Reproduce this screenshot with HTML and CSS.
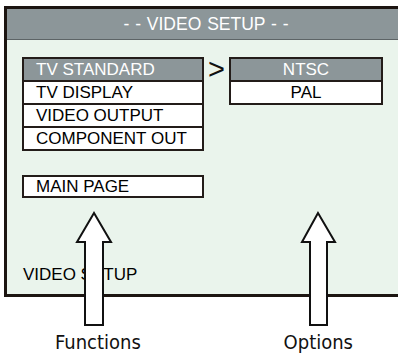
FILE: index.html
```html
<!DOCTYPE html>
<html lang="en">
<head>
    <meta charset="UTF-8">
    <title>Video Setup</title>
    <link rel="stylesheet" href="styles.css">
</head>
<body>
    <div class="page">
        <div class="screen">
            <div class="screen-title">- - VIDEO SETUP - -</div>
            <div class="screen-body">
                <div class="menus">
                    <div class="functions">
                        <div class="menu">
                            <div class="item selected">TV STANDARD</div>
                            <div class="item">TV DISPLAY</div>
                            <div class="item">VIDEO OUTPUT</div>
                            <div class="item">COMPONENT OUT</div>
                        </div>
                        <div class="menu main-page">
                            <div class="item">MAIN PAGE</div>
                        </div>
                    </div>
                    <div class="pointer">&gt;</div>
                    <div class="menu options">
                        <div class="item selected">NTSC</div>
                        <div class="item">PAL</div>
                    </div>
                </div>
                <div class="screen-footer">VIDEO SETUP</div>
            </div>
        </div>

        <div class="captions">
            <span class="caption caption-left">Functions</span>
            <span class="caption caption-right">Options</span>
        </div>

        <!-- callout arrows drawn over the screen -->
        <svg class="arrows" width="398" height="355" viewBox="0 0 398 355">
            <path d="M94 213 L77 242 L85 242 L85 325 L103 325 L103 242 L111 242 Z" />
            <path d="M318 213 L302 242 L310 242 L310 325 L327 325 L327 242 L335 242 Z" />
        </svg>
    </div>
</body>
</html>
```

FILE: styles.css
```css
body {
    margin: 0;
    background-color: #fff;
    overflow: hidden;
    font-family: "Liberation Sans", Arial, sans-serif;
}
.page {
    position: relative;
    width: 398px;
    height: 355px;
    overflow: hidden;
}
.screen {
    margin: 6px 0 0 4px;
    width: 420px;
    height: 285px;
    border: 3px solid #1c1511;
    border-right: none;
    background-color: #eaf4ec;
    display: flex;
    flex-direction: column;
}
.screen-title {
    height: 30px;
    line-height: 30px;
    background-color: #8c9699;
    border-bottom: 1px solid #5d6466;
    color: #fff;
    font-size: 17.5px;
    word-spacing: 1px;
    padding-right: 22px;
    text-align: center;
}
.screen-body {
    flex: 1;
    display: flex;
    flex-direction: column;
    padding: 17px 0 9px 15px;
}
.menus {
    display: flex;
    align-items: flex-start;
}
.functions {
    display: flex;
    flex-direction: column;
    gap: 24px;
    width: 182px;
}
.menu {
    border: 2px solid #231c19;
    background-color: #fff;
}
.item {
    height: 21px;
    line-height: 21px;
    font-size: 17px;
    color: #000;
    padding-left: 12px;
    border-bottom: 2px solid #231c19;
}
.item:last-child {
    border-bottom: none;
}
.item.selected {
    background-color: #8c9699;
    color: #fff;
}
.main-page .item {
    height: 19px;
    line-height: 19px;
}
.pointer {
    width: 25px;
    font-size: 29px;
    line-height: 24px;
    color: #111;
    text-align: center;
    padding-top: 0;
}
.options {
    width: 150px;
}
.options .item {
    padding-left: 0;
    text-align: center;
}
.screen-footer {
    margin-top: auto;
    font-size: 17px;
    line-height: 20px;
    color: #000;
    padding-left: 1px;
}
.captions {
    display: flex;
    padding-top: 35px;
}
.caption {
    font-family: "DejaVu Sans Condensed", "DejaVu Sans", sans-serif;
    font-stretch: condensed;
    font-size: 20px;
    line-height: 20px;
    color: #111;
}
.caption-left {
    margin-left: 55px;
}
.caption-right {
    margin-left: auto;
    margin-right: 45px;
}
.arrows {
    position: absolute;
    left: 0;
    top: 0;
}
.arrows path {
    fill: #fff;
    stroke: #111;
    stroke-width: 2;
    stroke-linejoin: miter;
}
```
